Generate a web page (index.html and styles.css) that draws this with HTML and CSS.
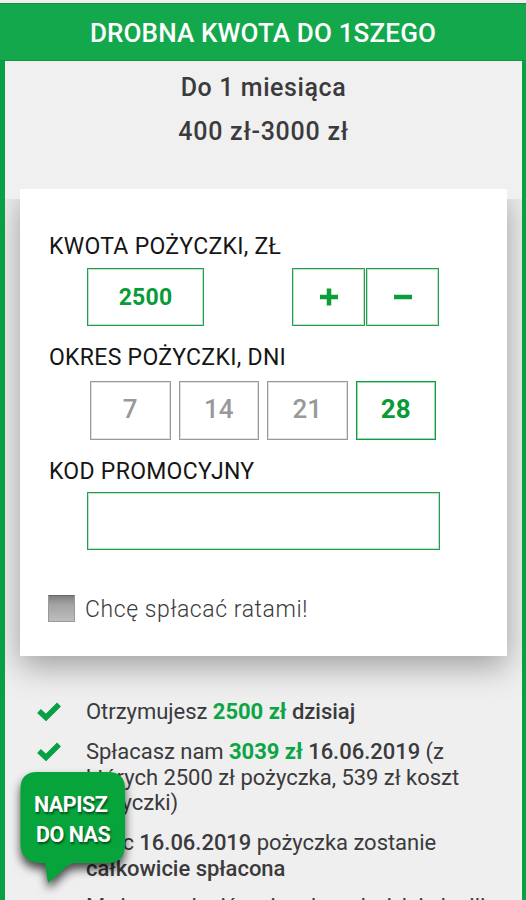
FILE: index.html
```html
<!DOCTYPE html>
<html lang="pl">
<head>
<meta charset="utf-8">
<title>Drobna kwota do 1szego</title>
<link rel="stylesheet" href="styles.css">
</head>
<body>
<main class="page">
  <h1 class="title">DROBNA KWOTA DO 1SZEGO</h1>
  <section class="offer">
    <div class="intro">
      <p>Do 1 miesiąca</p>
      <p class="range">400 zł-3000 zł</p>
    </div>
    <form class="card">
      <h2 class="label">KWOTA POŻYCZKI, ZŁ</h2>
      <div class="amount">
        <div class="box value">2500</div>
        <div class="steps">
          <button type="button" class="box step"><svg width="18" height="18" viewBox="0 0 18 18"><path d="M9 .5v17M0 9h18"/></svg></button>
          <button type="button" class="box step"><svg width="18" height="18" viewBox="0 0 18 18"><path d="M0 9h18"/></svg></button>
        </div>
      </div>
      <h2 class="label label-days">OKRES POŻYCZKI, DNI</h2>
      <div class="days">
        <button type="button" class="day">7</button>
        <button type="button" class="day">14</button>
        <button type="button" class="day">21</button>
        <button type="button" class="day active">28</button>
      </div>
      <h2 class="label label-promo">KOD PROMOCYJNY</h2>
      <div class="box promo"></div>
      <div class="rates"><span class="check"></span><span>Chcę spłacać ratami!</span></div>
    </form>
    <ul class="list">
      <li><svg class="tick" width="24" height="19" viewBox="0 0 24 19"><path d="M2 9l7 6.500L22 2.500"/></svg><div>Otrzymujesz <b class="green">2500 zł</b> <b>dzisiaj</b></div></li>
      <li><svg class="tick" width="24" height="19" viewBox="0 0 24 19"><path d="M2 9l7 6.500L22 2.500"/></svg><div>Spłacasz nam <b class="green">3039 zł</b> <b>16.06.2019</b> (z<br>których 2500 zł pożyczka, 539 zł koszt<br>pożyczki)</div></li>
      <li><svg class="tick" width="24" height="19" viewBox="0 0 24 19"><path d="M2 9l7 6.500L22 2.500"/></svg><div>Więc <b>16.06.2019</b> pożyczka zostanie<br><b>całkowicie spłacona</b></div></li>
      <li class="next"><svg class="tick" width="24" height="19" viewBox="0 0 24 19"><path d="M2 9l7 6.500L22 2.500"/></svg><div>Możesz spłacić pożyczkę w każdej chwili</div></li>
    </ul>
  </section>
  <a class="chat">
    <svg width="130" height="150" viewBox="0 0 130 150"><path d="M25 10H96Q113 10 113 27V82Q113 101 96 101H62Q54 103 48 111L36 121L33 101H27Q8.500 99 8.500 82V27Q8.500 10 25 10Z"/></svg>
    <span class="chat-text"><span>NAPISZ</span><span class="chat-second">DO NAS</span></span>
  </a>
</main>
</body>
</html>
```
FILE: styles.css
```css
* { box-sizing: border-box; }
body { margin: 0; font-family: Roboto, "Liberation Sans", sans-serif; color: #3b3a3c; background: #efefef; }
p, h1, h2, ul { margin: 0; padding: 0; }
.page { position: relative; height: 900px; overflow: hidden; padding-top: 3px; display: flex; flex-direction: column; }

.title {
  flex: none; height: 58px; border-top: 1px solid #158c43; border-bottom: 1px solid #109443;
  background: #14a84c; color: #fff; font-size: 26px; line-height: 59px; font-weight: 500;
  text-align: center; letter-spacing: .15px;
}

.offer { flex: 1; min-height: 0; isolation: isolate; overflow: hidden; border: solid #07a044; border-width: 0 4px 0 5px; background: #efefef; }
.intro { height: 138px; padding-top: 5px; background: #f0f0f0; text-align: center; font-size: 25px; line-height: 44px; font-weight: 500; letter-spacing: .6px; }
.range { letter-spacing: .75px; }

.card { position: relative; width: 487px; height: 467px; margin: -10px 0 0 15px; padding: 43px 67px 0; background: #fff; }
.card::before { content: ""; position: absolute; z-index: -1; inset: 0; box-shadow: 0 10px 30px rgba(0, 0, 0, .34); }

.label { margin-left: -38px; font-weight: 400; font-size: 23px; line-height: 30px; letter-spacing: .29px; color: #151515; white-space: nowrap; }
.label-days { margin-top: 17px; }
.label-promo { margin-top: 17px; }

.box { height: 58px; border: 1px solid #239f4d; box-shadow: inset 0 0 0 1px rgba(35, 159, 77, .3); background: #fff; }
.amount { display: flex; justify-content: space-between; width: 352px; margin-top: 6px; }
.value { width: 117px; color: #089b38; font-size: 23px; font-weight: 700; line-height: 58px; text-align: center; letter-spacing: .2px; }
.steps { display: flex; gap: 1px; }
.step { width: 73px; padding: 0; display: flex; align-items: center; justify-content: center; }
.step svg { fill: none; stroke: #0a9f3a; stroke-width: 4.5; }

.days { display: flex; gap: 8px; margin: 8px 0 0 3px; }
.day {
  width: 80.5px; height: 59px; padding: 0 0 4px; background: #fff; color: #999;
  border: 1px solid #999; box-shadow: inset 0 0 0 1px rgba(153, 153, 153, .3);
  font: 500 26px Roboto, "Liberation Sans", sans-serif;
}
.day.active { border-color: #0c9f41; box-shadow: inset 0 0 0 1px rgba(12, 159, 65, .4); color: #089b38; font-weight: 700; }
.promo { width: 353px; margin-top: 5px; }

.rates { display: flex; align-items: center; gap: 10px; margin: 43px 0 0 -39px; font-size: 23px; line-height: 30px; font-weight: 300; letter-spacing: .58px; white-space: nowrap; }
.rates span:last-child { padding-top: 2px; }
.check { width: 27px; height: 27px; margin-bottom: 2px; background: linear-gradient(#808080, #a4a4a4 35%, #bdbdbd); border: 1px solid #999; border-top-color: #666; }

.list { list-style: none; padding-top: 43px; font-size: 22px; line-height: 25.7px; letter-spacing: -.03px; white-space: nowrap; }
.list li { display: flex; gap: 25px; margin: 0 0 14.3px 32px; }
.list li.next { margin-top: -2px; }
.list b { font-weight: 500; }
.list .green { color: #0ca544; font-weight: 700; }
.tick { flex: none; margin-top: 3px; fill: none; stroke: #07a044; stroke-width: 5.5; }
.next .tick { margin-top: 6px; }

.chat { position: absolute; left: 12px; top: 762px; }
.chat svg { display: block; fill: #06a43b; filter: drop-shadow(0 6px 5px rgba(0, 0, 0, .7)); }
.chat-text { position: absolute; left: 22px; top: 28px; color: #fff; font-size: 21.5px; font-weight: 700; line-height: 30px; letter-spacing: -.5px; text-shadow: 1px 2px 2px rgba(0, 0, 0, .5); white-space: nowrap; }
.chat-text span { display: block; }
.chat-second { margin-left: 2px; }
```
